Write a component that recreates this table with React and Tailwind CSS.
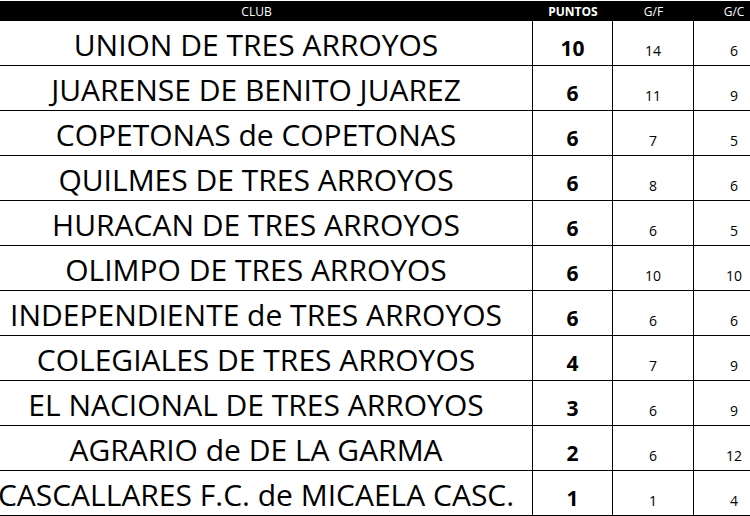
import React from "react";

// tabla de posiciones
const rows = [
  ["UNION DE TRES ARROYOS", 10, 14, 6],
  ["JUARENSE DE BENITO JUAREZ", 6, 11, 9],
  ["COPETONAS de COPETONAS", 6, 7, 5],
  ["QUILMES DE TRES ARROYOS", 6, 8, 6],
  ["HURACAN DE TRES ARROYOS", 6, 6, 5],
  ["OLIMPO DE TRES ARROYOS", 6, 10, 10],
  ["INDEPENDIENTE de TRES ARROYOS", 6, 6, 6],
  ["COLEGIALES DE TRES ARROYOS", 4, 7, 9],
  ["EL NACIONAL DE TRES ARROYOS", 3, 6, 9],
  ["AGRARIO de DE LA GARMA", 2, 6, 12],
  ["CASCALLARES F.C. de MICAELA CASC.", 1, 1, 4],
];

export default function App() {
  return (
    <div className="w-[750px] h-[516px] overflow-hidden bg-white font-['Open_Sans',sans-serif] text-black">
      <div className="-ml-5 mt-px grid w-[794px] grid-cols-[553px_80px_81px_80px]">
        {/* header */}
        <div className="h-5 bg-black flex items-end justify-center pb-[3px] text-[12px] leading-none text-white">CLUB</div>
        <div className="h-5 bg-black flex items-end justify-center pb-[3px] text-[12px] leading-none font-bold text-white">PUNTOS</div>
        <div className="h-5 bg-black flex items-end justify-center pb-[3px] text-[12px] leading-none text-white">G/F</div>
        <div className="h-5 bg-black flex items-end justify-center pb-[3px] text-[12px] leading-none text-white">G/C</div>

        {rows.map(([club, pts, gf, gc], i) => (
          <React.Fragment key={i}>
            <div className="h-[45px] border-b border-r border-black flex items-end justify-center pb-[5px] text-[30px] leading-none whitespace-nowrap">
              {club}
            </div>
            <div className="h-[45px] border-b border-r border-black flex items-end justify-center pb-[6px] text-[21px] leading-none font-bold">
              {pts}
            </div>
            <div className="h-[45px] border-b border-r border-black flex items-end justify-center pb-[7px] text-[14px] leading-none">
              {gf}
            </div>
            <div className="h-[45px] border-b border-black flex items-end justify-center pb-[7px] text-[14px] leading-none">
              {gc}
            </div>
          </React.Fragment>
        ))}
      </div>
    </div>
  );
}
